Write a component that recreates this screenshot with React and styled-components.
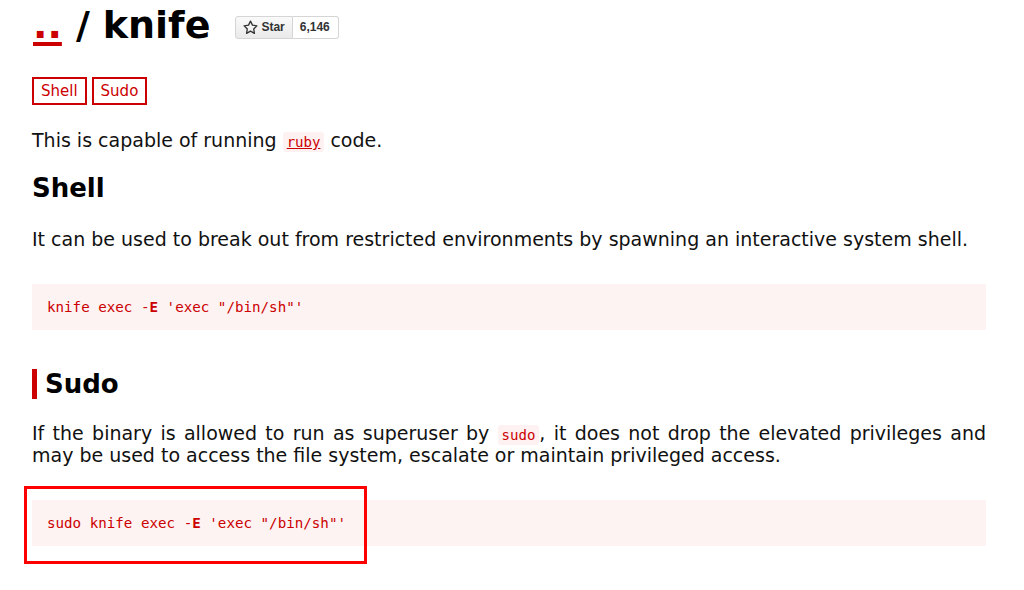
import React from 'react';
import styled, {createGlobalStyle} from 'styled-components';

const red = '#cc0000';

const Global = createGlobalStyle`
  html, body {
    margin: 0;
    padding: 0;
    background: #fff;
  }
  body {
    font-family: "DejaVu Sans", sans-serif;
    color: #111;
  }
`;

const Page = styled.div`
  width: 954px;
  padding: 0 0 40px 32px;
`;

const Title = styled.h1`
  display: flex;
  align-items: center;
  margin: 0;
  height: 50px;
  font-family: "DejaVu Sans", sans-serif;
  font-size: 38px;
  font-weight: bold;
  color: #000;
`;

const Home = styled.a`
  color: ${red};
  text-decoration: underline;
  text-decoration-thickness: 4px;
  text-underline-offset: 4px;
  margin-left: 1px;
  margin-right: 14px;
`;

const Slash = styled.span`
  margin-right: 13px;
`;

const StarButton = styled.span`
  display: inline-flex;
  margin-left: 25px;
  margin-top: 4px;
  height: 23px;
  font-family: "Liberation Sans", Arial, sans-serif;
  font-size: 12px;
  font-weight: bold;
  color: #333;
`;

const StarLabel = styled.span`
  display: flex;
  align-items: center;
  gap: 3px;
  padding: 0 7px 0 7px;
  background: linear-gradient(#fafafa, #eaeaea);
  border: 1px solid #d5d5d5;
  border-radius: 3px 0 0 3px;
`;

const StarCount = styled.span`
  display: flex;
  align-items: center;
  padding: 0 8px 0 7px;
  background: #fff;
  border: 1px solid #d5d5d5;
  border-left: none;
  border-radius: 0 3px 3px 0;
`;

const Tags = styled.div`
  display: flex;
  gap: 5px;
  margin-top: 27px;
`;

const Tag = styled.a`
  display: flex;
  align-items: center;
  height: 24px;
  padding: 0 7px;
  border: 2px solid ${red};
  color: ${red};
  font-size: 15px;
  text-decoration: none;
`;

const Para = styled.p`
  margin: ${p => p.$top}px 0 0;
  font-size: 19px;
  line-height: 22px;
  text-align: ${p => (p.$justify ? 'justify' : 'left')};
`;

const Code = styled.code`
  font-family: "DejaVu Sans Mono", monospace;
  font-size: 14px;
  line-height: 1;
  color: ${red};
  background: #fdf1f1;
  padding: 2px 4px;
  border-radius: 3px;
  text-decoration: ${p => (p.$link ? 'underline' : 'none')};
`;

const Heading = styled.h2`
  margin: ${p => p.$top}px 0 0;
  font-size: 26px;
  line-height: ${p => (p.$bar ? 30 : 32)}px;
  font-weight: bold;
  color: #000;
  ${p => p.$bar && `
    border-left: 5px solid ${red};
    padding-left: 8px;
  `}
`;

const CodeWrap = styled.div`
  position: relative;
  margin-top: 34px;
`;

const Pre = styled.pre`
  margin: 0;
  padding: 14px 15px;
  background: #fdf3f3;
  font-family: "DejaVu Sans Mono", monospace;
  font-size: 14.2px;
  line-height: 18px;
  color: ${red};
`;

const Flag = styled.b`
  font-weight: bold;
`;

const Highlight = styled.div`
  position: absolute;
  left: -8px;
  top: -14px;
  width: 337px;
  height: 72px;
  border: 3px solid #ff0000;
  pointer-events: none;
`;

const StarIcon = () => (
  <svg width="15" height="15" viewBox="0 0 16 16" fill="none" stroke="#333" strokeWidth="1.4" strokeLinejoin="round">
    <path d="M8 1.2l2.1 4.3 4.7.7-3.4 3.3.8 4.7L8 11.9l-4.2 2.3.8-4.7L1.2 6.2l4.7-.7z" />
  </svg>
);

export default function App() {
  return (
    <Page>
      <Global />
      <Title>
        <Home>..</Home>
        <Slash>/</Slash>
        <span>knife</span>
        <StarButton>
          <StarLabel><StarIcon />Star</StarLabel>
          <StarCount>6,146</StarCount>
        </StarButton>
      </Title>

      <Tags>
        <Tag>Shell</Tag>
        <Tag>Sudo</Tag>
      </Tags>

      <Para $top={24}>
        This is capable of running <Code $link>ruby</Code> code.
      </Para>

      <Heading $top={21}>Shell</Heading>
      <Para $top={24}>
        It can be used to break out from restricted environments by spawning an interactive system shell.
      </Para>
      <CodeWrap>
        <Pre>knife exec -<Flag>E</Flag> 'exec "/bin/sh"'</Pre>
      </CodeWrap>

      <Heading $top={39} $bar>Sudo</Heading>
      <Para $top={23} $justify>
        If the binary is allowed to run as superuser by <Code>sudo</Code>, it does not drop the elevated privileges and
        may be used to access the file system, escalate or maintain privileged access.
      </Para>
      <CodeWrap>
        <Pre>sudo knife exec -<Flag>E</Flag> 'exec "/bin/sh"'</Pre>
        <Highlight />
      </CodeWrap>
    </Page>
  );
}
